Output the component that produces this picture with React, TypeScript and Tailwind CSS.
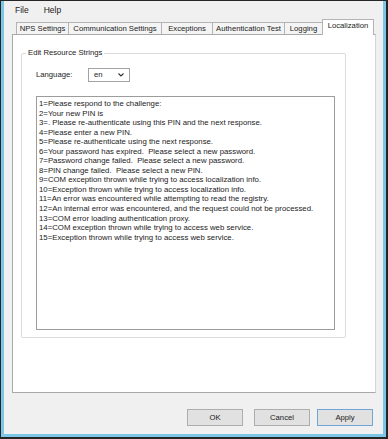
import React from "react";

const lines = [
  "1=Please respond to the challenge:",
  "2=Your new PIN is",
  "3=. Please re-authenticate using this PIN and the next response.",
  "4=Please enter a new PIN.",
  "5=Please re-authenticate using the next response.",
  "6=Your password has expired.  Please select a new password.",
  "7=Password change failed.  Please select a new password.",
  "8=PIN change failed.  Please select a new PIN.",
  "9=COM exception thrown while trying to access localization info.",
  "10=Exception thrown while trying to access localization info.",
  "11=An error was encountered while attempting to read the registry.",
  "12=An internal error was encountered, and the request could not be processed.",
  "13=COM error loading authentication proxy.",
  "14=COM exception thrown while trying to access web service.",
  "15=Exception thrown while trying to access web service.",
];

const tabs = [
  { label: "NPS Settings", w: "w-[52px]" },
  { label: "Communication Settings", w: "w-[93px]" },
  { label: "Exceptions", w: "w-[51px]" },
  { label: "Authentication Test", w: "w-[72px]" },
  { label: "Logging", w: "w-[38px]" },
];

export default function App() {
  return (
    <div
      className="w-[388px] h-[439px] bg-[#262626] pt-px pl-px pr-[2px] pb-[2px] overflow-hidden"
      style={{ fontFamily: '"Liberation Sans", Arial, sans-serif' }}
    >
      <div className="h-full border-l-[3px] border-r-[3px] border-b-[3px] border-[#7cc6e8] bg-[#f0f0f0] flex flex-col text-[#1b1b1b]">
        {/* Menu */}
        <div className="h-[18px] flex items-center pl-[11px] gap-[15px] text-[8.5px]">
          <span>File</span>
          <span>Help</span>
        </div>
        {/* Tabs */}
        <div className="relative z-10 h-[16px] flex items-end pl-[12px] text-[7.7px]">
          {tabs.map((t) => (
            <div
              key={t.label}
              className={`${t.w} h-[12px] mb-px bg-[#f4f4f4] border-t border-l border-[#b4b4b4] flex items-center justify-center whitespace-nowrap leading-none`}
            >
              {t.label}
            </div>
          ))}
          <div className="w-[52px] h-[16px] bg-white border-t border-l border-r border-[#b4b4b4] flex items-start justify-center pt-[2px] whitespace-nowrap leading-none">
            Localization
          </div>
        </div>
        {/* Panel */}
        <div className="-mt-px ml-[8px] mr-[7px] h-[359px] bg-white border border-[#a9a9a9] border-r-[#d4d4d4] pt-[18px] pl-[8px] pr-[29px]">
          {/* Group box */}
          <div className="relative h-[285px] border border-[#dcdcdc] rounded-[2px] pt-[14px] pl-[14px]">
            <div className="absolute -top-[5px] left-[4px] bg-white px-[2px] text-[7.7px] leading-none">
              Edit Resource Strings
            </div>
            <div className="flex items-center text-[7.7px] h-[14px]">
              <span className="w-[52px]">Language:</span>
              <div className="w-[42px] h-[14px] border border-[#a3a3a3] bg-white flex items-center pl-[5px] pr-[5px] justify-between">
                <span>en</span>
                <svg width="6" height="4" viewBox="0 0 6 4">
                  <path d="M0.5 0.5 L3 3 L5.5 0.5" stroke="#333" strokeWidth="1.1" fill="none" />
                </svg>
              </div>
            </div>
            <div className="mt-[14px] w-[299px] h-[234px] border border-[#9c9c9c] bg-white pt-[2px] pl-[2px] text-[7.8px] leading-[9.55px] whitespace-pre">
              {lines.map((l) => (
                <div key={l}>{l}</div>
              ))}
            </div>
          </div>
        </div>
        {/* Buttons */}
        <div className="mt-[16px] flex pl-[183px] text-[7.7px]">
          <div className="w-[56px] h-[17px] bg-[#e1e1e1] border border-[#adadad] flex items-center justify-center">
            OK
          </div>
          <div className="ml-[11px] w-[56px] h-[17px] bg-[#e1e1e1] border border-[#adadad] flex items-center justify-center">
            Cancel
          </div>
          <div className="ml-[7px] w-[56px] h-[17px] bg-[#e1e1e1] border border-[#6fa5d8] flex items-center justify-center">
            Apply
          </div>
        </div>
      </div>
    </div>
  );
}
